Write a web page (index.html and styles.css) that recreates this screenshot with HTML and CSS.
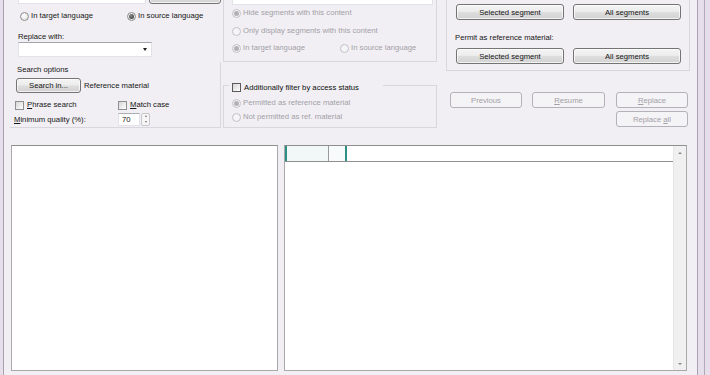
FILE: index.html
```html
<!DOCTYPE html>
<html lang="en">
<head>
<meta charset="utf-8">
<title>Find and replace</title>
<link rel="stylesheet" href="styles.css">
</head>
<body>
<div class="screen">
  <div class="window">
    <div class="top">
      <div class="col-left">
        <div class="row-find">
          <span class="textbox find-box"></span>
          <span class="btn find-btn"></span>
        </div>
        <div class="row-lang">
          <span class="opt w107"><span class="radio"></span><span>In target language</span></span>
          <span class="opt"><span class="radio on"></span><span>In source language</span></span>
        </div>
        <div class="lbl-replace">Replace with:</div>
        <div class="combo"><span class="combo-arrow"></span></div>
        <div class="group search-opts">
          <div class="group-title">Search options</div>
          <div class="row-searchin">
            <span class="btn btn-searchin">Search in...</span>
            <span class="ref-label">Reference material</span>
          </div>
          <div class="row-checks">
            <span class="opt w103"><span class="check"></span><span><u>P</u>hrase search</span></span>
            <span class="opt"><span class="check"></span><span><u>M</u>atch case</span></span>
          </div>
          <div class="row-quality">
            <span class="q-label"><u>M</u>inimum quality (%):</span>
            <span class="spin">
              <span class="spin-input">70</span>
              <span class="spin-btns"><span class="spin-up"></span><span class="spin-dn"></span></span>
            </span>
          </div>
        </div>
      </div>

      <div class="col-mid">
        <div class="group g-filter dis">
          <span class="textbox mid-box"></span>
          <div class="opt r-hide"><span class="radio on"></span><span>Hide segments with this content</span></div>
          <div class="opt r-only"><span class="radio"></span><span>Only display segments with this content</span></div>
          <div class="row-lang2">
            <span class="opt w108"><span class="radio on"></span><span>In target language</span></span>
            <span class="opt"><span class="radio"></span><span>In source language</span></span>
          </div>
        </div>
        <div class="group g-access">
          <div class="g-access-title"><span class="check dark"></span><span>Additionally filter by access status</span></div>
          <div class="opt dis r-perm"><span class="radio on"></span><span>Permitted as reference material</span></div>
          <div class="opt dis r-notperm"><span class="radio"></span><span>Not permitted as ref. material</span></div>
        </div>
      </div>

      <div class="col-right">
        <div class="group g-permit">
          <div class="btn-row">
            <span class="btn wseg">Selected segment</span>
            <span class="btn wseg">All segments</span>
          </div>
          <div class="permit-label">Permit as reference material:</div>
          <div class="btn-row row2">
            <span class="btn wseg">Selected segment</span>
            <span class="btn wseg">All segments</span>
          </div>
        </div>
        <div class="actions">
          <span class="btn dis w-prev"><span>Previous</span></span>
          <span class="btn dis w-res"><span><u>R</u>esume</span></span>
          <span class="btn dis w-rep"><span><u>R</u>eplace</span></span>
        </div>
        <div class="actions2">
          <span class="btn dis w-rep"><span>Replace <u>a</u>ll</span></span>
        </div>
      </div>
    </div>

    <div class="bottom">
      <div class="panel panel-left"></div>
      <div class="panel panel-right">
        <div class="grid">
          <div class="grid-header">
            <span class="hcell hcell1"></span>
            <span class="hcell hcell2"></span>
          </div>
          <div class="grid-body"></div>
        </div>
        <div class="vscroll">
          <span class="sc-up"></span>
          <span class="sc-dn"></span>
        </div>
      </div>
    </div>
  </div>
  <div class="rframe"></div>
</div>
</body>
</html>
```

FILE: styles.css
```css
* { box-sizing: border-box; margin: 0; padding: 0; }

html, body { width: 710px; height: 375px; overflow: hidden; }

body {
  background: #e6dfeb;
  font-family: "Liberation Sans", Arial, sans-serif;
  font-size: 7.7px;
  color: #151515;
}

u { text-decoration: underline; }

.screen { display: flex; height: 375px; }

.window {
  margin-left: 3px;
  width: 695px;
  height: 375px;
  border-left: 1px solid #aaa2b1;
  border-right: 1px solid #aaa2b1;
  background: #f1eff3;
  overflow: hidden;
}

.rframe {
  width: 7px;
  height: 375px;
  border-right: 1px solid #b2a9b9;
}

/* ---------- generic controls ---------- */
.textbox {
  display: block;
  background: #fff;
  border: 1px solid #e2e3ea;
  border-top-color: #abadb3;
}

.btn {
  display: flex;
  align-items: center;
  justify-content: center;
  white-space: nowrap;
  border: 1px solid #747474;
  border-radius: 3px;
  background: linear-gradient(#f4f4f4 0%, #ececec 48%, #dedede 52%, #d2d2d2 100%);
  box-shadow: inset 0 0 0 1px rgba(255, 255, 255, 0.7);
  color: #151515;
}

.btn.dis {
  border-color: #b4b1b8;
  background: #f4f3f5;
  box-shadow: none;
  color: #a39fa8;
}

.opt {
  display: flex;
  align-items: center;
  height: 10px;
  line-height: 10px;
  white-space: nowrap;
}

.radio {
  position: relative;
  flex: none;
  width: 9px;
  height: 9px;
  margin-right: 2px;
  border-radius: 50%;
  border: 1px solid #8e8f90;
  background: radial-gradient(circle at 40% 40%, #ffffff, #d9d9d9);
}

.radio.on::after {
  content: "";
  position: absolute;
  left: 1px;
  top: 1px;
  width: 5px;
  height: 5px;
  border-radius: 50%;
  background: radial-gradient(circle at 40% 35%, #8a8a8a, #2e2e2e);
}

.check {
  flex: none;
  width: 9px;
  height: 9px;
  margin-right: 3px;
  border: 1px solid #8e8f90;
  background: linear-gradient(135deg, #d6d6d6, #ffffff);
}

.check.dark { border-color: #5a5a5a; }

.dis { color: #a39fa8; }
.dis .radio {
  border-color: #c3c0c7;
  background: #f5f4f6;
}
.dis .radio.on::after { background: #b3afb7; }

.group { border: 1px solid #dad6de; }

/* ---------- top area ---------- */
.top {
  display: flex;
  margin-top: -12px;
  padding-left: 5px;
}

.col-left {
  width: 212px;
  display: flex;
  flex-direction: column;
}

.row-find {
  display: flex;
  height: 16px;
  padding-left: 9px;
  gap: 3px;
}
.find-box { width: 128px; height: 16px; }
.find-btn { width: 72px; height: 16px; }

.row-lang {
  display: flex;
  height: 10px;
  margin-top: 7px;
  padding-left: 11px;
}
.w107 { width: 107px; }
.w108 { width: 108px; }
.w103 { width: 103px; }

.lbl-replace {
  margin-top: 11px;
  padding-left: 9px;
  height: 10px;
  line-height: 10px;
}

.combo {
  margin-left: 9px;
  width: 134px;
  height: 15px;
  background: #fff;
  border: 1px solid #e2e3ea;
  border-top-color: #a4a6ad;
  display: flex;
  justify-content: flex-end;
  align-items: center;
  padding-right: 4px;
}
.combo-arrow {
  width: 0;
  height: 0;
  border-left: 2.5px solid transparent;
  border-right: 2.5px solid transparent;
  border-top: 3px solid #1e1e1e;
}

.search-opts {
  margin-top: 5px;
  height: 66px;
  border-top-color: transparent;
  border-left-color: transparent;
  padding: 2px 0 0 5px;
}
.group-title {
  height: 10px;
  line-height: 10px;
  padding-left: 2px;
}
.row-searchin {
  display: flex;
  align-items: center;
  margin-top: 3px;
  height: 15px;
  padding-left: 1px;
}
.btn-searchin { width: 65px; height: 15px; }
.ref-label { margin-left: 3px; }

.row-checks {
  display: flex;
  margin-top: 7px;
  height: 10px;
}

.row-quality {
  display: flex;
  align-items: center;
  height: 14px;
  margin-top: 2px;
}
.q-label {
  width: 104px;
  margin-left: -1px;
  white-space: nowrap;
}
.spin { display: flex; height: 13px; }
.spin-input {
  width: 22px;
  height: 13px;
  background: #fff;
  border: 1px solid #e2e3ea;
  border-top-color: #abadb3;
  padding-left: 3px;
  line-height: 11px;
}
.spin-btns {
  width: 9px;
  margin-left: 1px;
  display: flex;
  flex-direction: column;
  border: 1px solid #c9c6cc;
  border-radius: 2px;
  background: #f6f6f6;
}
.spin-up, .spin-dn {
  flex: 1;
  display: flex;
  align-items: center;
  justify-content: center;
}
.spin-up::after {
  content: "";
  border-left: 1.5px solid transparent;
  border-right: 1.5px solid transparent;
  border-bottom: 2px solid #777;
}
.spin-dn::after {
  content: "";
  border-left: 1.5px solid transparent;
  border-right: 1.5px solid transparent;
  border-top: 2px solid #777;
}

/* middle column */
.col-mid {
  width: 215px;
  margin-left: 2px;
  display: flex;
  flex-direction: column;
}
.g-filter {
  margin-top: -8px;
  width: 214px;
  padding: 8px 0 8px 8px;
}
.mid-box { width: 201px; height: 16px; }
.r-hide { margin-top: 3px; }
.r-only { margin-top: 8px; }
.row-lang2 { display: flex; margin-top: 7px; height: 10px; }

.g-access {
  margin-top: 23px;
  width: 214px;
  height: 43px;
  padding-left: 8px;
}
.g-access-title {
  display: flex;
  align-items: center;
  height: 10px;
  margin-top: -4px;
  margin-left: -3px;
  padding-left: 3px;
  width: 154px;
  background: #f1eff3;
  white-space: nowrap;
  color: #0e0e0e;
}
.r-perm { margin-top: 6px; }
.r-notperm { margin-top: 4px; }

/* right column */
.col-right {
  width: 247px;
  margin-left: 7px;
}
.g-permit {
  margin-left: 1px;
  width: 244px;
  margin-top: -8px;
  padding: 23px 0 6px 9px;
}
.btn-row { display: flex; gap: 9px; height: 16px; }
.wseg { width: 108px; height: 16px; }
.permit-label {
  margin-top: 13px;
  margin-left: -1px;
  height: 10px;
  line-height: 10px;
}
.row2 { margin-top: 5px; }

.actions {
  display: flex;
  margin-top: 21px;
  padding-left: 5px;
}
.w-prev { width: 72px; height: 16px; }
.w-res { width: 73px; height: 16px; margin-left: 10px; }
.w-rep { width: 72px; height: 16px; }
.actions .w-rep { margin-left: 11px; }
.actions2 {
  display: flex;
  margin-top: 3px;
  padding-left: 171px;
}

/* ---------- bottom panels ---------- */
.bottom {
  display: flex;
  margin-top: 17px;
  padding-left: 7px;
  gap: 6px;
}
.panel {
  height: 226px;
  background: #fff;
  border: 1px solid #a9a9a9;
  border-top-color: #8f8f8f;
}
.panel-left { width: 267px; }
.panel-right {
  width: 403px;
  display: flex;
}
.grid {
  flex: 1;
  display: flex;
  flex-direction: column;
}
.grid-header {
  display: flex;
  height: 16px;
  border-bottom: 1px solid #8f8f8f;
}
.hcell { display: block; height: 15px; }
.hcell1 {
  width: 44px;
  border-left: 2px solid #2c9184;
  border-right: 1px solid #9a9a9a;
  background: #f1f8f7;
}
.hcell2 {
  width: 18px;
  border-right: 2px solid #2c9184;
  background: #f7fbfb;
}
.grid-body { flex: 1; }

.vscroll {
  width: 13px;
  background: #f0f0f0;
  border-left: 1px solid #e6e6e6;
  display: flex;
  flex-direction: column;
  justify-content: space-between;
  align-items: center;
  padding: 6px 0 5px;
}
.sc-up {
  width: 0;
  height: 0;
  border-left: 2px solid transparent;
  border-right: 2px solid transparent;
  border-bottom: 2px solid #8a8a8a;
}
.sc-dn {
  width: 0;
  height: 0;
  border-left: 2px solid transparent;
  border-right: 2px solid transparent;
  border-top: 2px solid #8a8a8a;
}
```
